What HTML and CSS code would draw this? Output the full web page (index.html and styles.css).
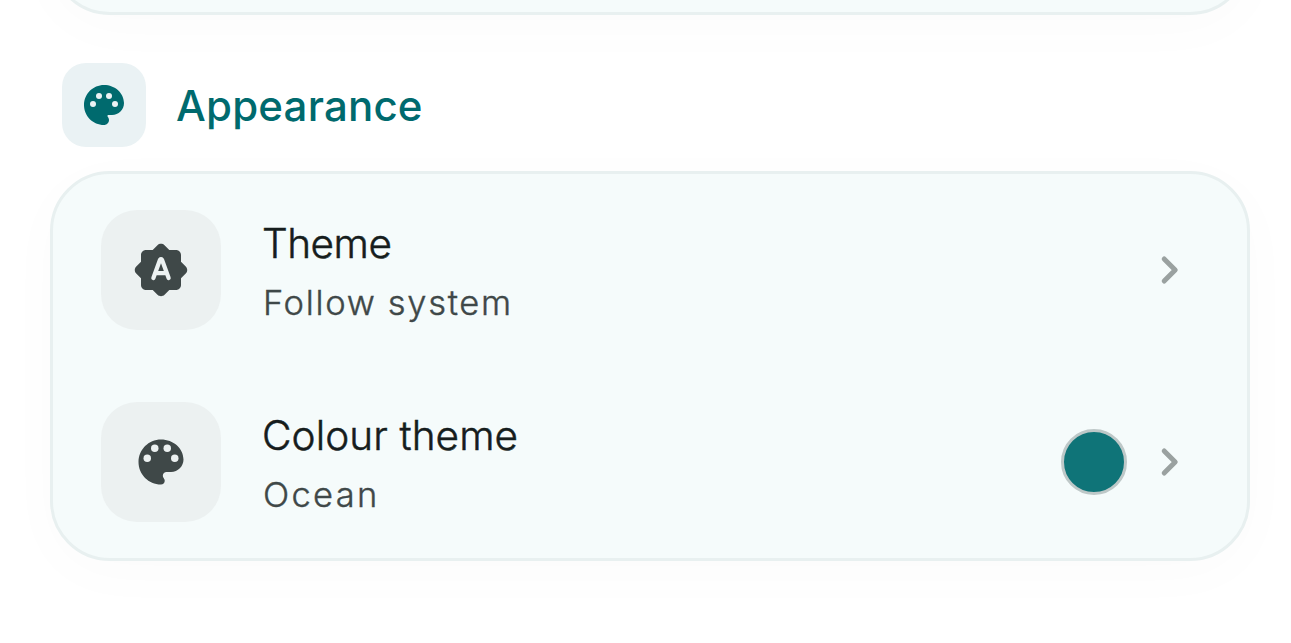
FILE: index.html
```html
<!DOCTYPE html>
<html lang="en-GB">
<head>
<meta charset="utf-8">
<title>Settings</title>
<link rel="stylesheet" href="styles.css">
</head>
<body>
<main class="settings">
  <section class="card card-previous"></section>
  <header class="section-header">
    <div class="section-icon">
      <svg width="48" height="48" viewBox="0 0 24 24"><path fill="currentColor" d="M12 2C6.49 2 2 6.49 2 12s4.49 10 10 10c1.38 0 2.5-1.12 2.5-2.5 0-.61-.23-1.2-.64-1.67-.08-.1-.13-.21-.13-.33 0-.28.22-.5.5-.5H16c3.31 0 6-2.69 6-6 0-4.96-4.49-9-10-9z"/><g class="header-dots"><circle cx="6.5" cy="11.5" r="1.5"/><circle cx="9.5" cy="7.5" r="1.5"/><circle cx="14.5" cy="7.5" r="1.5"/><circle cx="17.5" cy="11.5" r="1.5"/></g></svg>
    </div>
    <h2 class="section-title">Appearance</h2>
  </header>
  <section class="card">
    <div class="row">
      <div class="row-icon">
        <svg width="60" height="60" viewBox="0 0 24 24"><path fill="currentColor" d="M20 8.69V6c0-1.1-.9-2-2-2h-2.69l-1.9-1.9c-.78-.78-2.05-.78-2.83 0L8.69 4H6c-1.1 0-2 .9-2 2v2.69l-1.9 1.9c-.78.78-.78 2.05 0 2.83l1.9 1.9V18c0 1.1.9 2 2 2h2.69l1.9 1.9c.78.78 2.05.78 2.83 0l1.9-1.9H18c1.1 0 2-.9 2-2v-2.69l1.9-1.9c.78-.78.78-2.05 0-2.83L20 8.69z"/><path class="auto-mark" d="M8.95 15.2 11.6 7.9q.4-.5.8 0l2.65 7.3M10.1 13.25h3.8"/></svg>
      </div>
      <div class="row-text">
        <div class="row-title theme-title">Theme</div>
        <div class="row-value theme-value">Follow system</div>
      </div>
      <svg class="chevron" width="24" height="36" viewBox="0 0 24 36"><path d="M6.2 7 17.2 18 6.2 29"/></svg>
    </div>
    <div class="row">
      <div class="row-icon">
        <svg width="60" height="60" viewBox="0 0 24 24"><path fill="currentColor" d="M12 3c-4.97 0-9 4.03-9 9s4.03 9 9 9c.83 0 1.5-.67 1.5-1.5 0-.39-.15-.74-.39-1.01-.23-.26-.38-.61-.38-.99 0-.83.67-1.5 1.5-1.5H16c2.76 0 5-2.24 5-5 0-4.42-4.03-8-9-8z"/><g class="row-dots"><circle cx="6.5" cy="10.5" r="1.5"/><circle cx="9.5" cy="6.5" r="1.5"/><circle cx="14.5" cy="6.5" r="1.5"/><circle cx="17.5" cy="10.5" r="1.5"/></g></svg>
      </div>
      <div class="row-text">
        <div class="row-title colour-title">Colour theme</div>
        <div class="row-value colour-value">Ocean</div>
      </div>
      <div class="swatch"></div>
      <svg class="chevron" width="24" height="36" viewBox="0 0 24 36"><path d="M6.2 7 17.2 18 6.2 29"/></svg>
    </div>
  </section>
</main>
</body>
</html>
```
FILE: styles.css
```css
* { box-sizing: border-box; }
body { margin: 0; background: #fff; font-family: Inter, "Open Sans", sans-serif; }
svg { display: block; flex: none; }
.settings {
  height: 643px;
  overflow: hidden;
  display: flex;
  flex-direction: column;
  justify-content: flex-end;
  padding: 0 41px 82px 50px;
}
.card {
  flex: none;
  border: 3px solid #e8f0f0;
  border-radius: 60px;
  background: #f5fbfb;
  box-shadow: 0 12px 60px rgba(0, 0, 0, .02);
}
.card-previous { height: 240px; }
.section-header {
  flex: none;
  display: flex;
  align-items: center;
  gap: 30px;
  margin: 48px 12px 24px;
  height: 84px;
}
.section-icon {
  width: 84px;
  height: 84px;
  display: grid;
  place-items: center;
  border-radius: 24px;
  background: #eaf2f4;
  color: #006a6e;
}
.section-title {
  margin: 0;
  padding-top: 2px;
  font-size: 42px;
  line-height: 60px;
  font-weight: 500;
  letter-spacing: .2px;
  color: #006a6e;
}
.header-dots { fill: #eaf2f4; }
.row-dots { fill: #ecf1f1; }
.row {
  display: flex;
  align-items: center;
  height: 192px;
  padding: 0 65px 0 48px;
}
.row-icon {
  flex: none;
  width: 120px;
  height: 120px;
  display: grid;
  place-items: center;
  border-radius: 36px;
  background: #ecf1f1;
  color: #3f4848;
}
.auto-mark { fill: none; stroke: #ecf1f1; stroke-width: 1.7; stroke-linecap: round; stroke-linejoin: round; }
.row-text { flex: 1; margin-left: 41px; padding-top: 6px; }
.row-title { font-size: 40.5px; line-height: 60px; font-weight: 300; -webkit-text-stroke: .5px #161d1d; color: #161d1d; }
.row-value { padding-left: 1px; font-size: 34.5px; line-height: 58px; font-weight: 300; -webkit-text-stroke: .4px #3f4848; color: #3f4848; }
.theme-title { letter-spacing: -.5px; }
.theme-value { letter-spacing: 1.67px; }
.colour-title { letter-spacing: .1px; }
.colour-value { letter-spacing: 2.3px; }
.swatch {
  width: 66px;
  height: 66px;
  margin-right: 31px;
  border: 3px solid #bec8c8;
  border-radius: 50%;
  background: #0f7478;
}
.chevron path { fill: none; stroke: #9aa1a0; stroke-width: 5; stroke-linecap: round; stroke-linejoin: round; }
```
